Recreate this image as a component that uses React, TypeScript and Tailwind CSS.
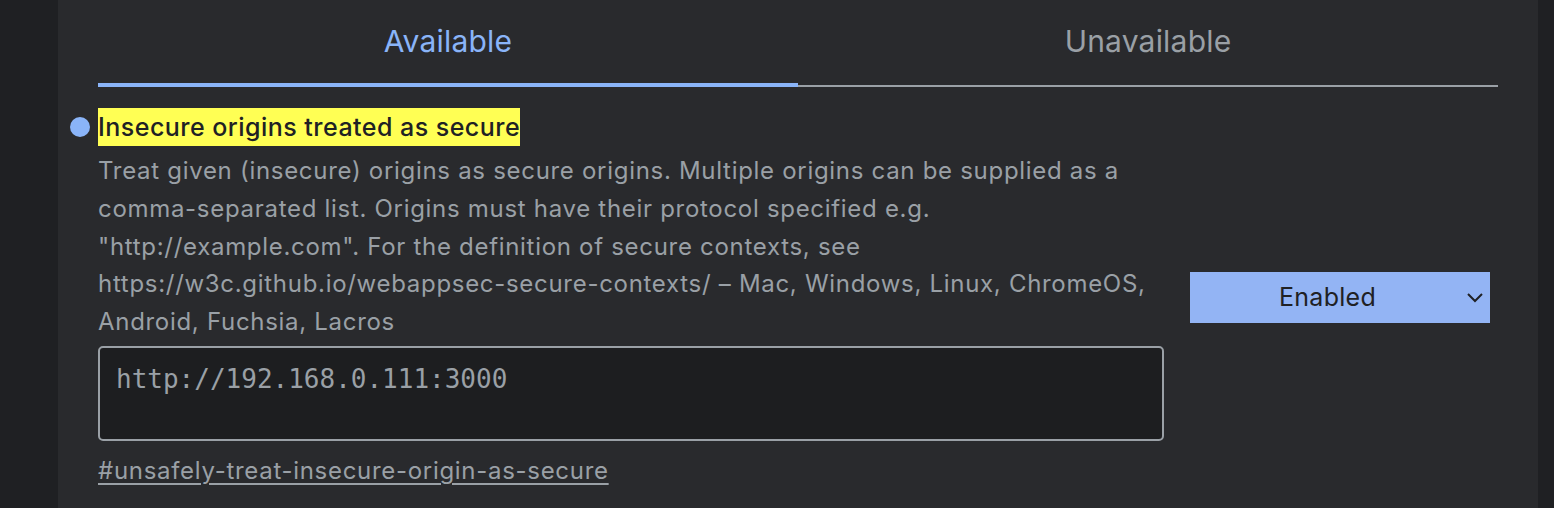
import React from "react";

export default function App() {
  return (
    <div className="flex h-[508px] w-full overflow-hidden bg-[#202124]" style={{ fontFamily: "Inter, 'Noto Sans', sans-serif" }}>
      <div className="w-[58px] shrink-0 bg-[#1f2023]" />
      <div className="flex-1 bg-[#292a2d] px-[40px]">
        <div className="grid grid-cols-2">
          <div className="relative flex h-[87px] items-start justify-center pt-[22px]">
            <span className="text-[30px] leading-[38px] tracking-[0.2px] text-[#8ab4f8]">Available</span>
            <div className="absolute bottom-0 left-0 right-0 h-[4px] bg-[#8ab4f8]" />
          </div>
          <div className="relative flex h-[87px] items-start justify-center pt-[22px]">
            <span className="text-[30px] leading-[38px] tracking-[0.2px] text-[#9aa0a6]">Unavailable</span>
            <div className="absolute bottom-0 left-0 right-0 h-[2px] bg-[#9aa0a6]" />
          </div>
        </div>
        <div className="flex items-center pt-[21px]">
          <div className="w-[1066px] shrink-0">
            <div className="relative flex">
              <span className="absolute left-[-28px] top-[9px] h-[20px] w-[20px] rounded-full bg-[#8ab4f8]" />
              <h2 className="bg-[#ffff54] text-[25px] font-medium leading-[38px] tracking-[0.47px] text-[#202124]">Insecure origins treated as secure</h2>
            </div>
            <p className="mt-[6px] text-[24px] leading-[37.75px] tracking-[0.7px] text-[#9aa0a6]">
              Treat given (insecure) origins as secure origins. Multiple origins can be supplied as a comma-separated list. Origins must have their protocol specified e.g. "http://example.com". For the definition of secure contexts, see https://w3c.github.io/webappsec-secure-contexts/ – Mac, Windows, Linux, ChromeOS, Android, Fuchsia, Lacros
            </p>
            <div className="mt-[5px] h-[95px] w-full rounded-[5px] border-2 border-[#9aa0a6] bg-[#1d1e20] px-[16px] pt-[15px]">
              <span className="text-[26px] leading-[32px] text-[#9aa0a6]" style={{ fontFamily: "'DejaVu Sans Mono', 'Liberation Mono', monospace" }}>http://192.168.0.111:3000</span>
            </div>
            <a className="mt-[14px] block text-[24px] leading-[32px] tracking-[0.7px] text-[#9aa0a6] underline decoration-[2px] underline-offset-[4px]">#unsafely-treat-insecure-origin-as-secure</a>
          </div>
          <div className="relative ml-[26px] flex h-[51px] w-[300px] items-center justify-center bg-[#93b4f4] pr-[25px] text-[25px] tracking-[0.3px] text-[#202124]">
            <span>Enabled</span>
            <svg className="absolute right-[7px] top-[21px]" width="16" height="10" viewBox="0 0 16 10" fill="none">
              <path d="M1 1l7 7 7-7" stroke="#202124" strokeWidth="2" />
            </svg>
          </div>
        </div>
      </div>
      <div className="w-[16px] shrink-0 bg-[#1f2023]" />
    </div>
  );
}
